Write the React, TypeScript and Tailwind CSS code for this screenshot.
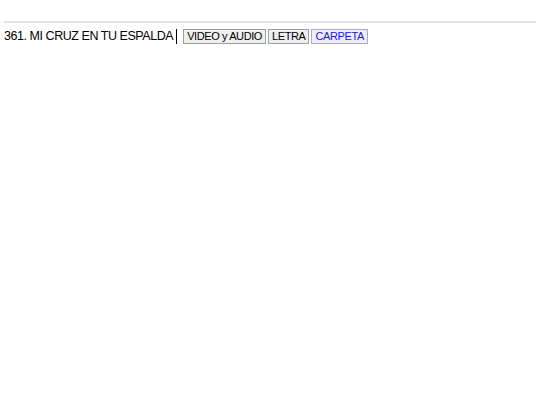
import React from "react";

const Btn: React.FC<{ label: string; blue?: boolean }> = ({ label, blue }) => (
    <button
        className={`h-[15px] px-[3px] border leading-none text-[11px] tracking-[-0.4px] ${blue ? "border-[#a8a8d8] bg-[#eeeefa] text-[#1a1ad0]" : "border-[#a0a0a0] bg-[#efefef] text-black"}`}
    >
        {label}
    </button>
);

export default function App() {
    return (
        <div className="min-h-screen bg-white px-[4px] pt-[21px] font-['Liberation_Sans',Arial,sans-serif]">
            <hr className="border-0 border-t-2 border-[#e2e2e2]" />
            <div className="flex items-center mt-[6px] h-[15px]">
                <span className="text-[12.5px] tracking-[-0.45px] text-black leading-none">361. MI CRUZ EN TU ESPALDA</span>
                <span className="ml-[3px] w-px h-[15px] bg-black" />
                <div className="flex items-center gap-[2px] ml-[6px]">
                    <Btn label="VIDEO y AUDIO" />
                    <Btn label="LETRA" />
                    <Btn label="CARPETA" blue />
                </div>
            </div>
        </div>
    );
}
